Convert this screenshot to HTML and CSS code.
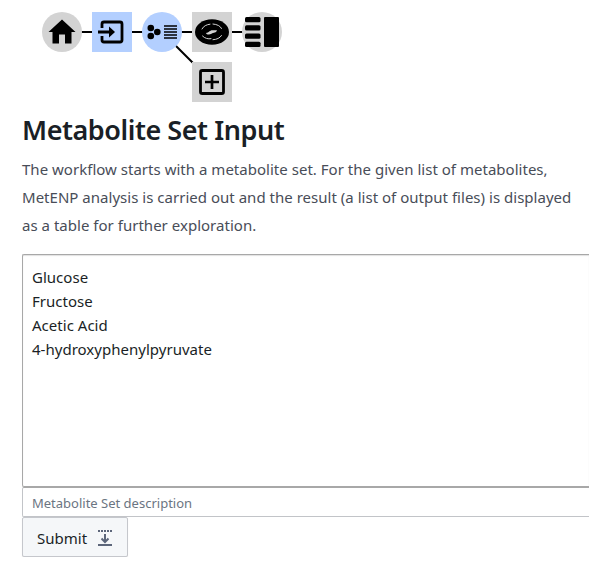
FILE: index.html
```html
<!DOCTYPE html>
<html lang="en">
<head>
<meta charset="utf-8">
<title>Metabolite Set Input</title>
<link rel="stylesheet" href="styles.css">
</head>
<body>
<main class="page">
  <svg class="workflow" width="290" height="104" viewBox="0 0 290 104" aria-hidden="true">
    <path class="edge" d="M62 32H262M162 32L212 82"/>
    <!-- home -->
    <circle class="node" cx="62" cy="32" r="20"/>
    <path d="M62 19.500L75.500 32H71.500V43.500H65V34.500H59V43.500H52.500V32H48.500Z"/>
    <!-- input -->
    <rect class="node active" x="92" y="12" width="40" height="40"/>
    <path class="outline" d="M102 28V24Q102 22 104 22H120Q122 22 122 24V40Q122 42 120 42H104Q102 42 102 40V36M98 32H111"/>
    <path d="M109 26.500L115 32L109 37.500Z"/>
    <!-- metabolite set -->
    <circle class="node active" cx="162" cy="32" r="20"/>
    <circle cx="150.800" cy="28" r="3.300"/><circle cx="150.800" cy="36" r="3.300"/><circle cx="157.300" cy="32" r="3.300"/>
    <path class="rows" d="M164 26H177M164 29H177M164 32H177M164 35H177M164 38H177"/>
    <!-- mitochondrion -->
    <rect class="node" x="192" y="12" width="40" height="40"/>
    <ellipse cx="212" cy="32" rx="17" ry="12.700"/>
    <path class="fold" d="M202 29C203.500 26 206.500 24.600 210 24.200M213 24C217 24.300 220.500 26 221.500 28.500M221.500 35.500C220 38 217 39.500 213 39.700M202.500 36C205 38.500 208 39.200 211 38.700"/>
    <path class="cell" d="M206 33C209 33 209.500 30.300 212.500 30.300H217C216.500 33 213.500 32.500 211.500 33.800C209.500 35 206.500 34.800 206 33Z"/>
    <!-- table -->
    <circle class="node" cx="262" cy="32" r="20"/>
    <rect x="245" y="17" width="15.500" height="5.200" rx="1.500"/>
    <rect x="245" y="25.200" width="15.500" height="5.200" rx="1.500"/>
    <rect x="245" y="33.500" width="15.500" height="5.200" rx="1.500"/>
    <rect x="245" y="41.800" width="15.500" height="5.200" rx="1.500"/>
    <rect x="264" y="17" width="15" height="30" rx="1"/>
    <!-- add -->
    <rect class="node" x="192" y="62" width="40" height="40"/>
    <rect class="outline" x="200.500" y="70.500" width="23" height="23" rx="1.800"/>
    <path class="outline plus" d="M205 82H219M212 75V89"/>
  </svg>
  <h1 class="title">Metabolite Set Input</h1>
  <p class="intro">The workflow starts with a metabolite set. For the given list of metabolites,<br>MetENP analysis is carried out and the result (a list of output files) is displayed<br>as a table for further exploration.</p>
  <form class="form">
    <textarea class="metabolites" spellcheck="false">Glucose
Fructose
Acetic Acid
4-hydroxyphenylpyruvate</textarea>
    <input class="description" type="text" placeholder="Metabolite Set description">
    <button class="submit" type="button">Submit
      <svg class="submit-icon" width="16" height="18" viewBox="0 0 16 18" aria-hidden="true">
        <path class="dots" d="M1 2H15"/>
        <path class="arrow" d="M8 5V13M4.500 9.500L8 13L11.500 9.500M1 16H15"/>
      </svg>
    </button>
  </form>
</main>
</body>
</html>
```

FILE: styles.css
```css
* { box-sizing: border-box; }
body {
  margin: 0;
  overflow: hidden;
  background: #fff;
  color: #1a1f26;
  font: 15px/24px "Segoe UI", "Noto Sans", sans-serif;
}
.page { display: flex; flex-direction: column; }
.workflow { display: block; }
.node { fill: #d3d3d3; }
.node.active { fill: #b3cfff; }
.edge { fill: none; stroke: #000; stroke-width: 2; }
.outline { fill: none; stroke: #000; stroke-width: 2.800; }
.plus { stroke-width: 2.700; }
.rows { stroke: #000; stroke-width: 1.500; }
.fold { fill: none; stroke: #d3d3d3; stroke-width: 1; stroke-linecap: round; }
.cell { fill: #d3d3d3; }
.title {
  margin: 8px 0 0 22px;
  font-size: 27px;
  line-height: 36px;
  font-weight: 600;
  letter-spacing: -0.450px;
  white-space: nowrap;
}
.intro {
  margin: 7px 0 0 22px;
  line-height: 28px;
  letter-spacing: 0.020px;
  color: #484d58;
  white-space: nowrap;
}
.form {
  display: flex;
  flex-direction: column;
  align-items: flex-start;
  margin: 15px 0 0 22px;
}
.metabolites, .description {
  width: 100%;
  margin: 0;
  border: 1px solid #c2c4c8;
  border-right: 0;
  border-radius: 2px 0 0 2px;
  background: #fff;
  outline: 0;
  font-family: inherit;
}
.metabolites {
  display: block;
  height: 233px;
  padding: 10px 9px;
  border-color: #a8a8a8;
  box-shadow: inset 0 1px 1px #e2e2e2;
  color: inherit;
  font-size: 15px;
  line-height: 24px;
  letter-spacing: 0.020px;
  resize: none;
  overflow: hidden;
}
.description {
  height: 30px;
  padding: 1px 9px 0;
  border-top-color: #a8a8a8;
  font-size: 13px;
}
.description::placeholder { color: #6b7582; opacity: 1; }
.submit {
  display: flex;
  align-items: center;
  gap: 10px;
  width: 106px;
  height: 40px;
  padding: 2px 14px 0;
  border: 1px solid #c5c7cc;
  border-radius: 2px;
  background: #f5f7f9;
  box-shadow: 0 1px 1px #e4e4e4;
  color: #1a1f26;
  font: 15px/24px "Segoe UI", "Noto Sans", sans-serif;
}
.submit-icon { flex: none; fill: none; stroke: #5c667a; stroke-width: 2; }
.dots { stroke-dasharray: 2 1; }
```
